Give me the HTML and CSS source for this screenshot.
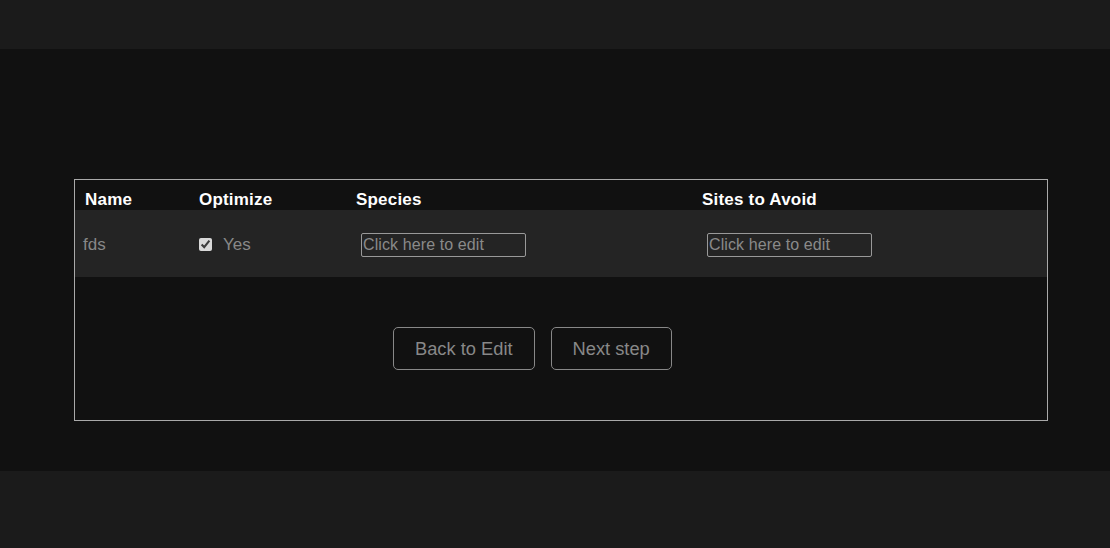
FILE: index.html
```html
<!DOCTYPE html>
<html lang="en">
<head>
  <meta charset="UTF-8">
  <title>Review</title>
  <link rel="stylesheet" href="styles.css">
</head>
<body>
  <div class="topbar"></div>
  <div class="main">
    <div class="panel">
      <table class="grid">
        <colgroup>
          <col class="c-name">
          <col class="c-opt">
          <col class="c-species">
          <col class="c-sites">
        </colgroup>
        <thead>
          <tr>
            <th>Name</th>
            <th>Optimize</th>
            <th>Species</th>
            <th>Sites to Avoid</th>
          </tr>
        </thead>
        <tbody>
          <tr>
            <td class="name-cell">fds</td>
            <td class="opt-cell">
              <label class="opt"><input type="checkbox" checked> Yes</label>
            </td>
            <td class="edit-cell"><input type="text" placeholder="Click here to edit"></td>
            <td class="edit-cell"><input type="text" placeholder="Click here to edit"></td>
          </tr>
        </tbody>
      </table>
      <div class="actions">
        <button class="btn">Back to Edit</button>
        <button class="btn">Next step</button>
      </div>
    </div>
  </div>
</body>
</html>
```

FILE: styles.css
```css
body {
  margin: 0;
  background-color: #1b1b1b;
  font-family: "Liberation Sans", Arial, sans-serif;
  color: #888;
}
.topbar {
  height: 49px;
}
.main {
  background-color: #111;
  padding: 130px 62px 50px 74px;
}
.panel {
  border: 1px solid #aaa;
}
.grid {
  width: 100%;
  border-collapse: collapse;
  table-layout: fixed;
}
.c-name { width: 114px; }
.c-opt { width: 157px; }
.c-species { width: 346px; }
th {
  height: 30px;
  box-sizing: border-box;
  padding: 0 0 1px 10px;
  vertical-align: bottom;
  text-align: left;
  color: #fff;
  font-size: 17px;
  letter-spacing: 0.2px;
  font-weight: bold;
  line-height: 18px;
}
tbody tr {
  background-color: #242424;
}
td {
  height: 65px;
  padding: 2px 0 0;
  vertical-align: middle;
  font-size: 17px;
}
.name-cell {
  padding-left: 8px;
}
.opt-cell {
  padding-left: 10px;
}
.opt {
  display: flex;
  align-items: center;
  gap: 11px;
}
.opt input {
  margin: 0;
  width: 13px;
  height: 13px;
  accent-color: #d8d8d8;
}
.edit-cell {
  padding-left: 15px;
}
.edit-cell input {
  display: block;
  width: 165px;
  height: 24px;
  box-sizing: border-box;
  margin: 0;
  padding: 0 1px;
  background: transparent;
  border: 1px solid #999;
  border-radius: 2px;
  font-family: inherit;
  font-size: 16px;
  letter-spacing: 0.1px;
  color: #999;
}
.edit-cell input::placeholder {
  color: #8a8a8a;
}
.actions {
  display: flex;
  gap: 16px;
  padding: 50px 0 50px 318px;
}
.btn {
  height: 43px;
  padding: 0 21px;
  background: transparent;
  border: 1px solid #888;
  border-radius: 5px;
  color: #888;
  font-family: inherit;
  font-size: 18.3px;
}
```
